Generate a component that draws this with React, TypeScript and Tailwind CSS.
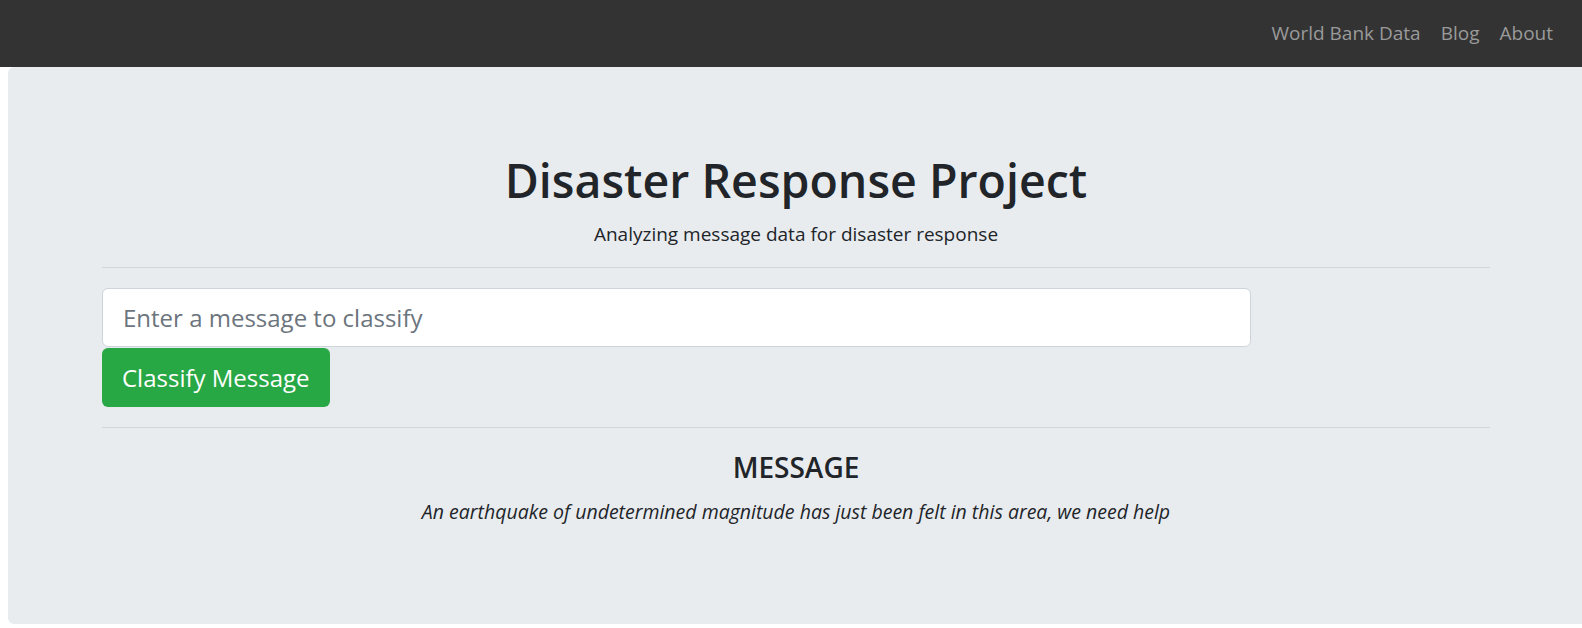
const navLinks = ["World Bank Data", "Blog", "About"];

export default function App() {
  return (
    <div className="min-h-[628px] bg-white font-['Open_Sans',sans-serif] text-[#212529]">
      <nav className="flex h-[67px] items-center justify-end bg-[#333333] pr-[19px]">
        <ul className="flex">
          {navLinks.map((link) => (
            <li key={link}>
              <a href="#" className="block px-[10px] text-[19px] text-[#9a9a9a]">
                {link}
              </a>
            </li>
          ))}
        </ul>
      </nav>

      <div className="ml-2 h-[557px] rounded-l-[6px] bg-[#e9ecef] pt-[84px]">
        <div className="ml-[94px] w-[1388px]">
          <h1 className="text-center text-[46.5px] leading-[58px] font-semibold">
            Disaster Response Project
          </h1>
          <p className="mt-[11px] text-center text-[19px] leading-[29px]">
            Analyzing message data for disaster response
          </p>
          <hr className="mt-[18px] border-[#d3d6d9]" />

          <form className="mt-[20px]" onSubmit={(e) => e.preventDefault()}>
            <input
              type="text"
              placeholder="Enter a message to classify"
              className="block h-[59px] w-[1149px] rounded-[6px] border border-[#ced4da] bg-white px-[20px] text-[24px] placeholder:text-[#6c757d] outline-none"
            />
            <button
              type="submit"
              className="mt-[1px] block h-[59px] rounded-[6px] bg-[#28a745] px-[20px] text-[24px] text-white"
            >
              Classify Message
            </button>
          </form>

          <hr className="mt-[20px] border-[#d3d6d9]" />

          <h4 className="mt-[22px] text-center text-[28px] leading-[35px] font-semibold">
            MESSAGE
          </h4>
          <p className="mt-[12px] text-center text-[19.5px] leading-[29px] italic">
            An earthquake of undetermined magnitude has just been felt in this area, we need help
          </p>
        </div>
      </div>
    </div>
  );
}
